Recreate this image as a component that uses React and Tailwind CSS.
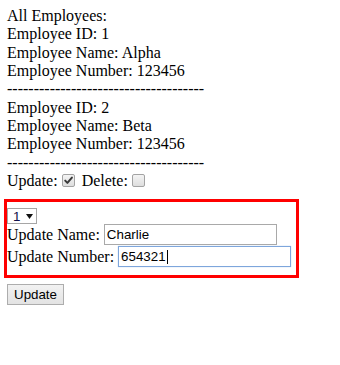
import React from 'react';

const employees = [
  { id: 1, name: 'Alpha', number: '123456' },
  { id: 2, name: 'Beta', number: '123456' },
];

const DASHES = '-'.repeat(37);

const Checkbox = ({ checked }) => (
  <span className="inline-block w-[13px] h-[13px] align-[-1px] ml-[4px] mr-[3px] rounded-[2px] border border-[#a3a3a3] bg-gradient-to-b from-[#f4f4f4] to-[#dedede] relative">
    {checked && (
      <svg viewBox="0 0 11 11" className="absolute inset-0 w-[11px] h-[11px]">
        <path d="M2.2 5.6 L4.4 7.9 L8.9 2.6" fill="none" stroke="#3a3a3a" strokeWidth="2" strokeLinecap="round" strokeLinejoin="round" />
      </svg>
    )}
  </span>
);

const App = () => {
  return (
    <div className="bg-white w-[340px] h-[365px] pt-[7px] pl-[7px] font-['Liberation_Serif',serif] text-[16px] leading-[18.33px] text-black">
      <div>All Employees:</div>
      {employees.map(emp => (
        <div key={emp.id}>
          <div>Employee ID: {emp.id}</div>
          <div>Employee Name: {emp.name}</div>
          <div>Employee Number: {emp.number}</div>
          <div>{DASHES}</div>
        </div>
      ))}
      <div>
        Update:<Checkbox checked /> Delete:<Checkbox />
      </div>

      {/* update form */}
      <div className="mt-[9px] -ml-[3px] w-[295px] border-[3px] border-[#ff0000] pt-[6px] pb-[8px] leading-[normal]">
        <div className="h-[16px] flex">
          <div className="h-[16px] w-[30px] border border-[#a6a6a6] flex items-center pl-[5px] gap-[6px] font-['Liberation_Sans',sans-serif] text-[13.33px] text-[#10104a]">
            <span className="leading-none">1</span>
            <svg viewBox="0 0 7 5" className="w-[7px] h-[5px]">
              <polygon points="0,0 7,0 3.5,5" fill="#111" />
            </svg>
          </div>
        </div>
        <div className="h-[21px] flex items-center gap-[4px]">
          <span>Update Name:</span>
          <div className="h-[21px] w-[173px] border border-[#a9a9a9] pl-[2px] flex items-center font-['Liberation_Sans',sans-serif] text-[13.33px]">
            Charlie
          </div>
        </div>
        <div className="h-[21px] mt-[1px] flex items-center gap-[4px]">
          <span>Update Number:</span>
          <div className="h-[21px] w-[173px] border border-[#7ea6dc] shadow-[0_0_1px_#a9c7ee] pl-[2px] flex items-center font-['Liberation_Sans',sans-serif] text-[13.33px]">
            654321
            <span className="inline-block w-px h-[14px] bg-black ml-px" />
          </div>
        </div>
      </div>

      <button className="mt-[6px] w-[57px] h-[21px] border border-[#adadad] bg-gradient-to-b from-[#f2f2f2] to-[#e3e3e3] font-['Liberation_Sans',sans-serif] text-[13.33px] text-black leading-none">
        Update
      </button>
    </div>
  );
};

export default App;
